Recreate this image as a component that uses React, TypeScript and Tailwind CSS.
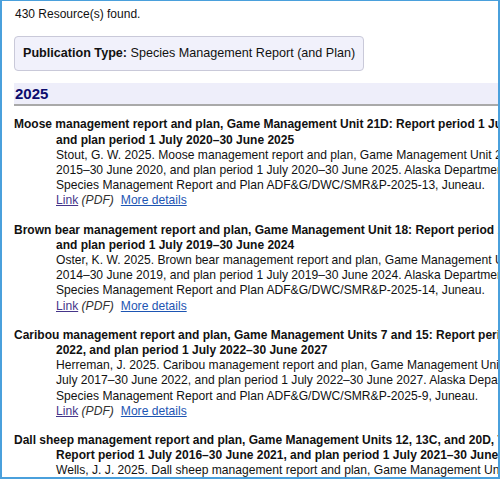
import React from 'react';

type Item = {
  title: string[];
  body: string[];
};

const items: Item[] = [
  {
    title: [
      'Moose management report and plan, Game Management Unit 21D: Report period 1 July 2015–30 June 2020,',
      'and plan period 1 July 2020–30 June 2025',
    ],
    body: [
      'Stout, G. W. 2025. Moose management report and plan, Game Management Unit 21D: Report period 1 July',
      '2015–30 June 2020, and plan period 1 July 2020–30 June 2025. Alaska Department of Fish and Game,',
      'Species Management Report and Plan ADF&G/DWC/SMR&P-2025-13, Juneau.',
    ],
  },
  {
    title: [
      'Brown bear management report and plan, Game Management Unit 18: Report period 1 July 2014–30 June 2019,',
      'and plan period 1 July 2019–30 June 2024',
    ],
    body: [
      'Oster, K. W. 2025. Brown bear management report and plan, Game Management Unit 18: Report period 1 July',
      '2014–30 June 2019, and plan period 1 July 2019–30 June 2024. Alaska Department of Fish and Game,',
      'Species Management Report and Plan ADF&G/DWC/SMR&P-2025-14, Juneau.',
    ],
  },
  {
    title: [
      'Caribou management report and plan, Game Management Units 7 and 15: Report period 1 July 2017–30 June',
      '2022, and plan period 1 July 2022–30 June 2027',
    ],
    body: [
      'Herreman, J. 2025. Caribou management report and plan, Game Management Units 7 and 15: Report period 1',
      'July 2017–30 June 2022, and plan period 1 July 2022–30 June 2027. Alaska Department of Fish and Game,',
      'Species Management Report and Plan ADF&G/DWC/SMR&P-2025-9, Juneau.',
    ],
  },
  {
    title: [
      'Dall sheep management report and plan, Game Management Units 12, 13C, and 20D, Tok Management Area:',
      'Report period 1 July 2016–30 June 2021, and plan period 1 July 2021–30 June 2026',
    ],
    body: [
      'Wells, J. J. 2025. Dall sheep management report and plan, Game Management Units 12, 13C, and 20D,',
      'Tok Management Area: Report period 1 July 2016–30 June 2021, and plan period 1 July 2021–30 June 2026.',
    ],
  },
];

const Resource: React.FC<{ item: Item }> = ({ item }) => (
  <div className="mb-[14px]">
    {item.title.map((line, i) => (
      <div key={i} className={`whitespace-nowrap font-bold ${i > 0 ? 'pl-[42px]' : ''}`}>
        {line}
      </div>
    ))}
    <div className="pl-[42px] text-[12.1px]">
      {item.body.map((line, i) => (
        <div key={i} className="whitespace-nowrap">
          {line}
        </div>
      ))}
      <div className="whitespace-nowrap">
        <a href="#" className="text-[#45358a] underline">Link</a>{' '}
        <span className="italic text-[#333]">(PDF)</span>
        <a href="#" className="ml-[7px] text-[#1d55b3] underline">More details</a>
      </div>
    </div>
  </div>
);

export default function App() {
  return (
    <div className="h-[479px] w-[500px] overflow-hidden border-x-2 border-t border-b-2 border-[#4aa0dc] bg-white font-['Liberation_Sans',Arial,sans-serif] text-[12px] leading-[15.2px] text-[#111]">
      <div className="w-[1200px] pl-3 pt-[6px]">
        <div className="pl-px">430 Resource(s) found.</div>

        <div className="mt-[14px] inline-block rounded-[4px] border border-[#c9c9d9] bg-[#f1f1fb] px-2 py-[9px] text-[12.6px] leading-[15px]">
          <span className="font-bold">Publication Type:</span> Species Management Report (and Plan)
        </div>

        <div className="mt-[12px] border-b-2 border-[#a9a9a9] bg-[#eeeefa] pl-px pt-[2px] pb-[1px]">
          <span className="text-[15px] font-bold leading-[17px] text-[#0c0c6e]">2025</span>
        </div>

        <div className="mt-[11px]">
          {items.map((item, i) => (
            <Resource key={i} item={item} />
          ))}
        </div>
      </div>
    </div>
  );
}
